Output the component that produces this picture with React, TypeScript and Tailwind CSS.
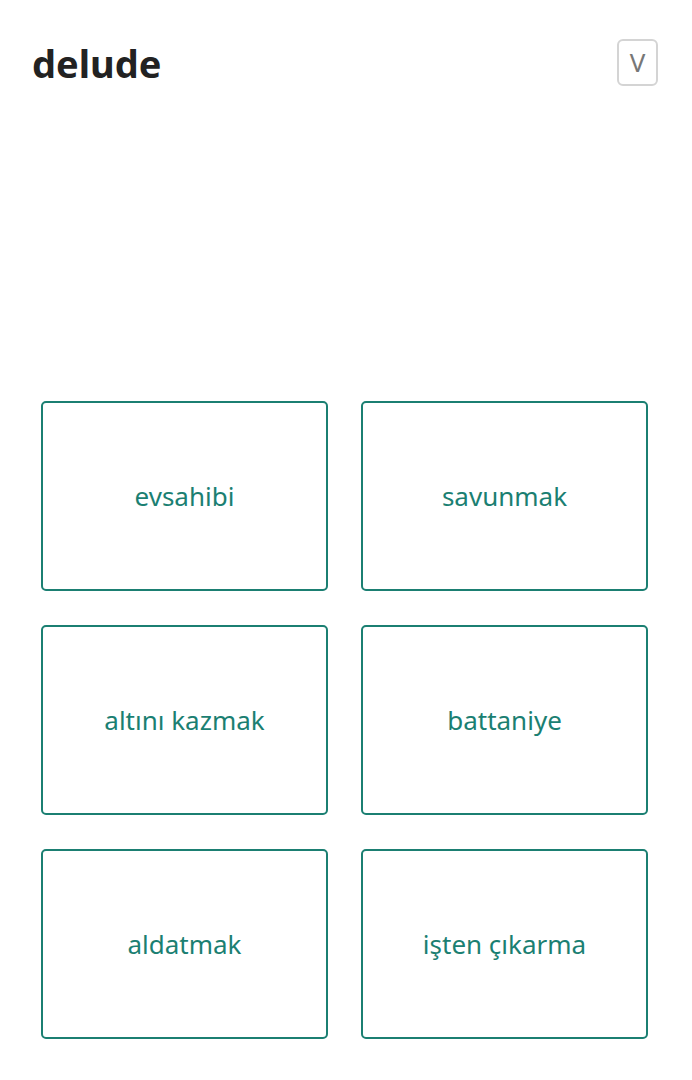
const words = [
  'evsahibi',
  'savunmak',
  'altını kazmak',
  'battaniye',
  'aldatmak',
  'işten çıkarma',
];

export default function App() {
  return (
    <div className="min-h-[1080px] w-full bg-white font-['Noto_Sans',sans-serif]">
      <header className="flex items-center justify-between pl-8 pr-[34px] pt-[39px]">
        <h1 className="text-[38px] font-bold leading-none text-[#222222]">delude</h1>
        <button className="flex h-[47px] w-[41px] items-center justify-center rounded-md border-2 border-[#d4d4d4] text-[26px] text-[#777777]">
          V
        </button>
      </header>

      <main className="mt-[315px] grid grid-cols-2 gap-x-[33px] gap-y-[34px] pl-[41px] pr-[44px]">
        {words.map((w) => (
          <button
            key={w}
            className="flex h-[190px] items-center justify-center rounded-[5px] border-2 border-[#1b7f72] text-[26px] text-[#1b7f72]"
          >
            {w}
          </button>
        ))}
      </main>
    </div>
  );
}
